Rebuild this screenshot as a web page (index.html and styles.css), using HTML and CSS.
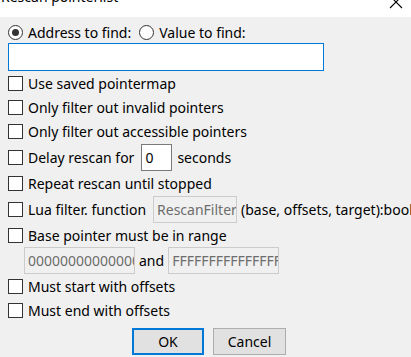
FILE: index.html
```html
<!DOCTYPE html>
<html>
<head>
<meta charset="utf-8">
<link rel="stylesheet" href="styles.css">
</head>
<body>
<div class="dialog">
  <div class="titlebar">
    <span class="title">Rescan pointerlist</span>
    <svg class="close" width="14" height="10" viewBox="0 0 14 10"><path d="M1 -4 L13 8 M13 -4 L1 8" stroke="#000" stroke-width="1.1" fill="none"/></svg>
  </div>
  <div class="content">
    <div class="row radio-row">
      <span class="radio checked"></span><span class="label">Address to find:</span>
      <span class="radio second"></span><span class="label">Value to find:</span>
    </div>
    <div class="edit focused"></div>
    <div class="row check-row"><span class="box"></span><span class="label">Use saved pointermap</span></div>
    <div class="row check-row"><span class="box"></span><span class="label">Only filter out invalid pointers</span></div>
    <div class="row check-row"><span class="box"></span><span class="label">Only filter out accessible pointers</span></div>
    <div class="row check-row delay-row"><span class="box"></span><span class="label">Delay rescan for</span><span class="input delay-input">0</span><span class="label">seconds</span></div>
    <div class="row check-row"><span class="box"></span><span class="label">Repeat rescan until stopped</span></div>
    <div class="row check-row lua-row"><span class="box"></span><span class="label">Lua filter. function</span><span class="input disabled lua-input">RescanFilter</span><span class="label">(base, offsets, target):bool</span></div>
    <div class="row check-row"><span class="box"></span><span class="label">Base pointer must be in range</span></div>
    <div class="row hex-row"><span class="input disabled hex-input">0000000000000000</span><span class="label and">and</span><span class="input disabled hex-input">FFFFFFFFFFFFFFFF</span></div>
    <div class="row check-row"><span class="box"></span><span class="label">Must start with offsets</span></div>
    <div class="row check-row"><span class="box"></span><span class="label">Must end with offsets</span></div>
    <div class="buttons">
      <span class="btn default">OK</span>
      <span class="btn">Cancel</span>
    </div>
  </div>
</div>
</body>
</html>
```
FILE: styles.css
```css
html, body {
  margin: 0;
  padding: 0;
  width: 411px;
  height: 357px;
  overflow: hidden;
  background: #f0f0f0;
  font-family: "Noto Sans", sans-serif;
  font-size: 14px;
  color: #000;
}
.dialog {
  display: flex;
  flex-direction: column;
  width: 411px;
  height: 357px;
}
.titlebar {
  height: 17px;
  background: #fff;
  position: relative;
  overflow: hidden;
  flex-shrink: 0;
}
.title {
  display: block;
  margin-top: -13px;
  margin-left: 1px;
  line-height: 20px;
  font-size: 14px;
}
.close {
  position: absolute;
  left: 389px;
  top: 0;
}
.content {
  display: flex;
  flex-direction: column;
  padding: 0 0 0 8px;
}
.row {
  display: flex;
  align-items: center;
  white-space: nowrap;
}
.radio-row {
  height: 22px;
  margin-top: 4px;
}
.radio {
  width: 13px;
  height: 13px;
  border: 1px solid #333;
  border-radius: 50%;
  background: #fff;
  box-sizing: content-box;
  position: relative;
  flex-shrink: 0;
  margin-right: 5px;
}
.radio.checked::after {
  content: "";
  position: absolute;
  left: 3px;
  top: 3px;
  width: 7px;
  height: 7px;
  border-radius: 50%;
  background: #333;
}
.radio.second {
  margin-left: 8px;
}
.edit {
  width: 314px;
  height: 26px;
  background: #fff;
  border: 1px solid #0078d7;
  flex-shrink: 0;
}
.check-row {
  height: 24px;
}
.box {
  width: 13px;
  height: 13px;
  border: 1px solid #333;
  background: #fff;
  flex-shrink: 0;
  margin-right: 5px;
}
.delay-row {
  height: 28px;
}
.input {
  display: inline-block;
  box-sizing: border-box;
  height: 27px;
  line-height: 25px;
  padding: 0 4px;
  border: 1px solid #7a7a7a;
  background: #fff;
  overflow: hidden;
  white-space: nowrap;
  flex-shrink: 0;
}
.delay-input {
  width: 31px;
  margin: 0 5px 0 7px;
  padding-left: 3px;
}
.disabled {
  border-color: #cccccc;
  background: #f0f0f0;
  color: #6d6d6d;
}
.lua-row {
  height: 28px;
}
.lua-input {
  width: 84px;
  margin: 0 4px 0 7px;
  height: 27px;
  padding-left: 3px;
}
.hex-row {
  height: 27px;
  padding-left: 16px;
}
.hex-input {
  width: 111px;
  padding-left: 3px;
}
.and {
  margin: 0 4px;
}
.buttons {
  display: flex;
  gap: 9px;
  margin-top: 6px;
  margin-left: 124px;
}
.btn {
  box-sizing: border-box;
  width: 72px;
  height: 27px;
  display: flex;
  align-items: center;
  justify-content: center;
  background: #e1e1e1;
  border: 1px solid #adadad;
}
.btn.default {
  border: 2px solid #0078d7;
}
.btn + .btn {
  width: 73px;
}
```
